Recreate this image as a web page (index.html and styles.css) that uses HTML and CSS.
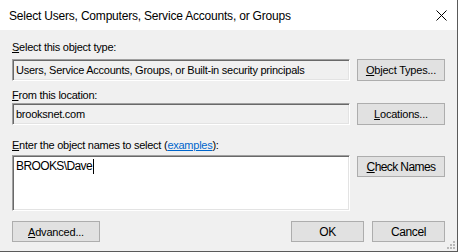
FILE: index.html
```html
<!DOCTYPE html>
<html lang="en">
<head>
    <meta charset="UTF-8">
    <title>Select Users, Computers, Service Accounts, or Groups</title>
    <link rel="stylesheet" href="styles.css">
</head>
<body>
    <div class="dialog">
        <div class="titlebar">
            <span class="title">Select Users, Computers, Service Accounts, or Groups</span>
            <span class="close">
                <svg width="11" height="11" viewBox="0 0 11 11"><path d="M0.5 0.5L10.5 10.5M10.5 0.5L0.5 10.5" stroke="#000" stroke-width="1" fill="none"/></svg>
            </span>
        </div>
        <div class="content">
            <div class="label label-type"><u>S</u>elect this object type:</div>
            <div class="row row-type">
                <div class="box readonly">Users, Service Accounts, Groups, or Built-in security principals</div>
                <button class="btn side-btn"><u>O</u>bject Types...</button>
            </div>
            <div class="label label-location"><u>F</u>rom this location:</div>
            <div class="row row-location">
                <div class="box readonly">brooksnet.com</div>
                <button class="btn side-btn"><u>L</u>ocations...</button>
            </div>
            <div class="label label-names"><u>E</u>nter the object names to select (<a href="#">examples</a>):</div>
            <div class="row row-names">
                <div class="box names">BROOKS\Dave<span class="caret"></span></div>
                <button class="btn side-btn check-btn"><u>C</u>heck Names</button>
            </div>
            <div class="footer">
                <button class="btn advanced-btn"><u>A</u>dvanced...</button>
                <div class="footer-right">
                    <button class="btn footer-btn">OK</button>
                    <button class="btn footer-btn">Cancel</button>
                </div>
            </div>
        </div>
        <svg class="grip" width="8" height="8" viewBox="0 0 8 8">
            <rect x="6" y="0" width="2" height="2" fill="#b8b8b8"/>
            <rect x="3" y="3" width="2" height="2" fill="#b8b8b8"/>
            <rect x="6" y="3" width="2" height="2" fill="#b8b8b8"/>
            <rect x="0" y="6" width="2" height="2" fill="#b8b8b8"/>
            <rect x="3" y="6" width="2" height="2" fill="#b8b8b8"/>
            <rect x="6" y="6" width="2" height="2" fill="#b8b8b8"/>
        </svg>
    </div>
</body>
</html>
```

FILE: styles.css
```css
html, body {
    margin: 0;
    padding: 0;
    background-color: #f0f0f0;
}
.dialog {
    position: relative;
    width: 457px;
    height: 251px;
    border-right: 1px solid #5a5a5a;
    border-bottom: 1px solid #5a5a5a;
    background-color: #f0f0f0;
    font-family: 'Liberation Sans', Arial, sans-serif;
    font-size: 11px;
    letter-spacing: -0.25px;
    color: #000;
}
.titlebar {
    height: 30px;
    background-color: #fff;
    display: flex;
    align-items: center;
    justify-content: space-between;
}
.title {
    font-size: 12px;
    letter-spacing: -0.2px;
    padding-left: 9px;
    padding-top: 1px;
}
.close {
    display: flex;
    margin-right: 10px;
    margin-top: 1px;
}
.content {
    padding: 0 12px;
}
.label {
    line-height: 13px;
    height: 13px;
}
.label a {
    color: #0066cc;
}
.label-type {
    margin-top: 11px;
}
.label-location {
    margin-top: 8px;
}
.label-names {
    margin-top: 14px;
}
.row {
    display: flex;
    gap: 7px;
    align-items: flex-start;
}
.row-type {
    margin-top: 5px;
}
.row-location {
    margin-top: 1px;
}
.row-names {
    margin-top: 3px;
}
.box {
    box-sizing: border-box;
    width: 338px;
    height: 22px;
    padding: 0 3px;
    display: flex;
    align-items: center;
    border-top: 1px solid #a0a0a0;
    border-left: 1px solid #a0a0a0;
    border-right: 1px solid #fff;
    border-bottom: 1px solid #fff;
    box-shadow: inset 1px 1px 0 #696969, inset -1px -1px 0 #e3e3e3;
}
.readonly {
    background-color: #f0f0f0;
}
.names {
    height: 56px;
    align-items: flex-start;
    padding-top: 3px;
    background-color: #fff;
    font-size: 12px;
    letter-spacing: -0.6px;
}
.caret {
    display: inline-block;
    width: 1px;
    height: 15px;
    background-color: #000;
    margin-left: 1px;
}
.btn {
    box-sizing: border-box;
    height: 22px;
    margin: 0;
    padding: 0;
    background-color: #e1e1e1;
    border: 1px solid #adadad;
    font-family: inherit;
    font-size: 11px;
    letter-spacing: -0.2px;
    color: #000;
}
.side-btn {
    width: 88px;
}
.check-btn {
    margin-top: 1px;
    height: 21px;
    font-size: 12px;
    letter-spacing: -0.6px;
}
.footer {
    margin-top: 10px;
    display: flex;
    justify-content: space-between;
}
.footer-right {
    display: flex;
    gap: 8px;
}
.advanced-btn {
    width: 88px;
    height: 21px;
}
.footer-btn {
    width: 73px;
    height: 21px;
    font-size: 12px;
    letter-spacing: -0.4px;
}
.grip {
    position: absolute;
    right: 2px;
    bottom: 2px;
}
```
